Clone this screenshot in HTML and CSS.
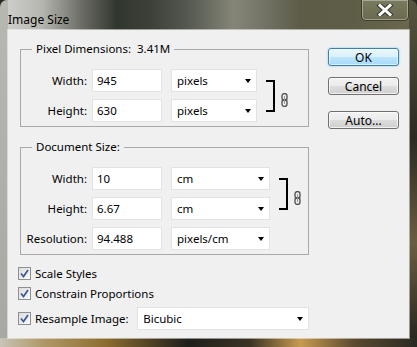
FILE: index.html
```html
<!DOCTYPE html>
<html>
<head>
    <title>Image Size</title>
    <link rel="stylesheet" href="styles.css">
</head>
<body>
    <div class="window">
        <div class="titlebar">
            <span class="title">Image Size</span>
            <div class="close">
                <svg width="20" height="12" viewBox="0 0 20 12">
                    <path d="M5 1.5 L15 10.5 M15 1.5 L5 10.5" stroke="#3a3a30" stroke-width="5" stroke-linecap="square"/>
                    <path d="M5 1.5 L15 10.5 M15 1.5 L5 10.5" stroke="#ffffff" stroke-width="3" stroke-linecap="square"/>
                </svg>
            </div>
        </div>
        <div class="client">
            <div class="main">
                <fieldset class="group">
                    <legend>Pixel Dimensions:&nbsp; 3.41M</legend>
                    <div class="linked">
                        <div class="rows">
                            <div class="row">
                                <label>Width:</label>
                                <div class="field">945</div>
                                <div class="select short">pixels<span class="arrow"></span></div>
                            </div>
                            <div class="row">
                                <label>Height:</label>
                                <div class="field">630</div>
                                <div class="select short">pixels<span class="arrow"></span></div>
                            </div>
                        </div>
                        <div class="bracket"></div>
                        <svg class="chain" width="7" height="14" viewBox="0 0 7 14">
                            <rect x="1" y="0.5" width="5" height="7" rx="2.5" fill="none" stroke="#555" stroke-width="1.4"/>
                            <rect x="1" y="6.5" width="5" height="7" rx="2.5" fill="none" stroke="#555" stroke-width="1.4"/>
                            <line x1="3.5" y1="3" x2="3.5" y2="11" stroke="#999" stroke-width="1"/>
                        </svg>
                    </div>
                </fieldset>

                <fieldset class="group">
                    <legend>Document Size:</legend>
                    <div class="linked">
                        <div class="rows">
                            <div class="row">
                                <label>Width:</label>
                                <div class="field">10</div>
                                <div class="select">cm<span class="arrow"></span></div>
                            </div>
                            <div class="row">
                                <label>Height:</label>
                                <div class="field">6.67</div>
                                <div class="select">cm<span class="arrow"></span></div>
                            </div>
                        </div>
                        <div class="bracket"></div>
                        <svg class="chain" width="7" height="14" viewBox="0 0 7 14">
                            <rect x="1" y="0.5" width="5" height="7" rx="2.5" fill="none" stroke="#555" stroke-width="1.4"/>
                            <rect x="1" y="6.5" width="5" height="7" rx="2.5" fill="none" stroke="#555" stroke-width="1.4"/>
                            <line x1="3.5" y1="3" x2="3.5" y2="11" stroke="#999" stroke-width="1"/>
                        </svg>
                    </div>
                    <div class="row">
                        <label>Resolution:</label>
                        <div class="field">94.488</div>
                        <div class="select">pixels/cm<span class="arrow"></span></div>
                    </div>
                </fieldset>

                <div class="options">
                    <div class="check-row">
                        <span class="checkbox"><svg width="9" height="9" viewBox="0 0 9 9"><path d="M1 4.5 L3.5 7.5 L8 1" fill="none" stroke="#3d5a9a" stroke-width="1.8"/></svg></span>
                        Scale Styles
                    </div>
                    <div class="check-row">
                        <span class="checkbox"><svg width="9" height="9" viewBox="0 0 9 9"><path d="M1 4.5 L3.5 7.5 L8 1" fill="none" stroke="#3d5a9a" stroke-width="1.8"/></svg></span>
                        Constrain Proportions
                    </div>
                    <div class="check-row resample">
                        <span class="checkbox"><svg width="9" height="9" viewBox="0 0 9 9"><path d="M1 4.5 L3.5 7.5 L8 1" fill="none" stroke="#3d5a9a" stroke-width="1.8"/></svg></span>
                        <span class="resample-label">Resample Image:</span>
                        <div class="select wide">Bicubic<span class="arrow"></span></div>
                    </div>
                </div>
            </div>

            <div class="buttons">
                <button class="btn default">OK</button>
                <button class="btn">Cancel</button>
                <button class="btn auto">Auto...</button>
            </div>
        </div>
    </div>
</body>
</html>
```

FILE: styles.css
```css
body {
    margin: 0;
    background-color: #2b2a22;
    font-family: "Noto Sans", "Open Sans", sans-serif;
    font-size: 11.5px;
    color: #000;
}
.window {
    width: 417px;
    height: 347px;
    border-radius: 7px 7px 0 0;
    overflow: hidden;
    background:
        linear-gradient(to right, #c8c4b8 0%, #b09a6a 10%, #8e6e30 25%, #1e1e1a 45%, #3a3424 60%, #c89a50 72%, #5a4a30 85%, #2a2a22 100%) left bottom / 100% 9px no-repeat,
        linear-gradient(to bottom, #b8b8b2 0%, #a8a8a2 100%) left top / 8px 100% no-repeat,
        linear-gradient(to bottom, #56563f 0%, #2c2a22 40%, #6a5e40 70%, #24221c 100%) right top / 8px 100% no-repeat,
        linear-gradient(to right, #d2d2d0 0%, #b6b6b0 10%, #686a62 20%, #31362f 28%, #3c4039 36%, #545850 45%, #858577 56%, #76766a 62%, #5d5c48 72%, #5e5d46 85%, #6b6a4f 100%);
}
.titlebar {
    height: 30px;
    display: flex;
    align-items: flex-start;
    justify-content: space-between;
}
.title {
    margin: 11px 0 0 8px;
    font-size: 12px;
    color: #000;
}
.close {
    margin-right: 8px;
    width: 46px;
    height: 20px;
    border: 1px solid #3e3d2c;
    border-top: none;
    border-radius: 0 0 5px 5px;
    box-shadow: inset 0 0 0 1px rgba(255, 255, 255, 0.35);
    background: linear-gradient(to bottom, #7a7a5e, #6a6a50);
    display: flex;
    align-items: center;
    justify-content: center;
}
.client {
    margin-left: 8px;
    width: 401px;
    height: 308px;
    box-sizing: border-box;
    background-color: #f0f0f0;
    box-shadow: 0 0 0 1px rgba(255, 255, 255, 0.5);
    display: flex;
    padding: 11px 0 0 12px;
}
.main {
    width: 289px;
}
.group {
    margin: 0;
    padding: 12px 0 4px 0;
    border: 1px solid #a9a9a9;
    width: 289px;
    box-sizing: border-box;
    min-width: 0;
}
.group + .group {
    margin-top: 12px;
}
.group legend {
    margin-left: 11px;
    padding: 0 4px;
    line-height: 16px;
    height: 16px;
}
.linked {
    display: flex;
    align-items: center;
}
.rows {
    display: flex;
    flex-direction: column;
    gap: 7px;
}
.linked + .row {
    margin-top: 7px;
}
.row {
    display: flex;
    align-items: center;
    height: 23px;
}
.row label {
    width: 66px;
    text-align: right;
    margin-right: 5px;
}
.field {
    width: 70px;
    height: 23px;
    box-sizing: border-box;
    background-color: #fff;
    border: 1px solid #e2e2e2;
    padding-left: 4px;
    line-height: 21px;
    margin-right: 9px;
}
.select {
    position: relative;
    width: 99px;
    height: 23px;
    box-sizing: border-box;
    background-color: #fff;
    border: 1px solid #e2e2e2;
    padding-left: 5px;
    line-height: 21px;
}
.select.short {
    width: 86px;
}
.select.wide {
    width: 173px;
}
.arrow {
    position: absolute;
    right: 5px;
    top: 9px;
    width: 0;
    height: 0;
    border-left: 3.5px solid transparent;
    border-right: 3.5px solid transparent;
    border-top: 4px solid #000;
}
.bracket {
    margin-left: 9px;
    width: 7px;
    height: 28px;
    border: 2px solid #000;
    border-left: none;
}
.chain {
    margin: 9px 0 0 6px;
}
.options {
    margin-left: -2px;
    margin-top: 8px;
}
.check-row {
    display: flex;
    align-items: center;
    height: 20px;
}
.check-row.resample {
    margin-top: 4px;
    height: 23px;
}
.checkbox {
    width: 13px;
    height: 13px;
    box-sizing: border-box;
    border: 1px solid #8e8f8f;
    background: linear-gradient(135deg, #dcdcdc, #fbfbfb);
    margin-right: 4px;
    display: flex;
    align-items: center;
    justify-content: center;
}
.resample-label {
    width: 103px;
}
.buttons {
    display: flex;
    flex-direction: column;
    margin-left: 19px;
    padding-top: 7px;
}
.btn {
    width: 71px;
    height: 18px;
    padding: 0;
    font-family: inherit;
    font-size: 12px;
    line-height: 15px;
    color: #000;
    border: 1px solid #707070;
    border-radius: 3px;
    background: linear-gradient(to bottom, #f2f2f2 0%, #ebebeb 50%, #dddddd 51%, #cfcfcf 100%);
    box-shadow: inset 0 0 0 1px rgba(255, 255, 255, 0.7);
    margin-bottom: 11px;
}
.btn.default {
    border-color: #3c7fb1;
    background: linear-gradient(to bottom, #eaf6fd 0%, #d9f0fc 50%, #bee6fd 51%, #a7d9f5 100%);
    box-shadow: inset 0 0 0 1px rgba(255, 255, 255, 0.6), 0 0 2px #5ec4f0;
}
.btn.auto {
    margin-top: 5px;
}
```
